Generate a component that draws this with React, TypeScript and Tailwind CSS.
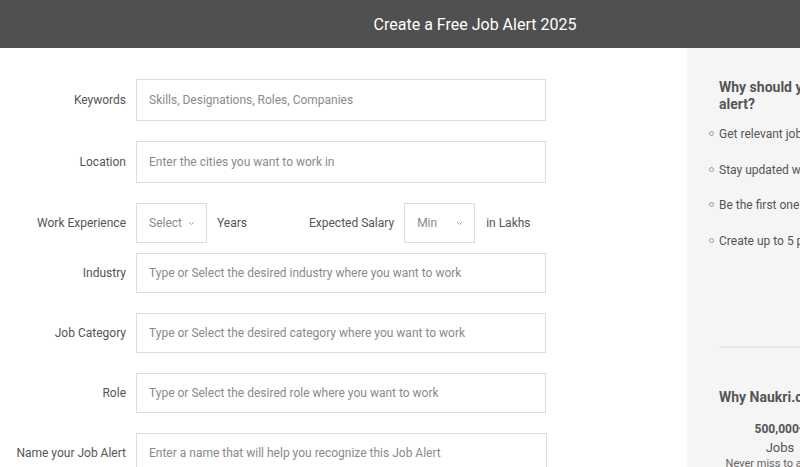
import { ReactNode } from "react";

function Chevron() {
    return (
        <svg width="7" height="5" viewBox="0 0 7 5" className="text-[#a8a8a8]">
            <path d="M1 1l2.5 2.5L6 1" fill="none" stroke="currentColor" strokeWidth="1" />
        </svg>
    );
}

function Row({ label, children, className = "" }: { label: string; children: ReactNode; className?: string }) {
    return (
        <div className={`flex items-center ${className}`}>
            <label className="w-[126px] shrink-0 text-right text-[12px] text-[#555]">{label}</label>
            <div className="ml-[10px] flex items-center">{children}</div>
        </div>
    );
}

function TextInput({ placeholder, h = "h-[42px]", w = "w-[410px]" }: { placeholder: string; h?: string; w?: string }) {
    return (
        <input
            placeholder={placeholder}
            className={`${h} ${w} border border-[#dcdcdc] bg-white pl-3 text-[12px] text-[#333] placeholder:text-[#8a8a8a] outline-none`}
        />
    );
}

function Dropdown({ value }: { value: string }) {
    return (
        <div className="h-[40px] w-[71px] border border-[#dcdcdc] flex items-center justify-between pl-3 pr-[11px] text-[12px] text-[#8a8a8a]">
            <span>{value}</span>
            <Chevron />
        </div>
    );
}

const perks = [
    "Get relevant jobs directly in your inbox",
    "Stay updated with latest opportunities",
    "Be the first one to apply",
    "Create up to 5 personalised job alerts",
];

export default function App() {
    return (
        <div className="h-screen w-screen overflow-hidden bg-white" style={{ fontFamily: "Roboto, 'Liberation Sans', sans-serif" }}>
            <div className="w-[950px]">
                {/* Header */}
                <div className="h-[48px] bg-[#505050] flex items-center justify-center">
                    <h1 className="text-[16px] text-white pt-[1px]">Create a Free Job Alert 2025</h1>
                </div>

                <div className="flex">
                    {/* Form */}
                    <div className="w-[687px] shrink-0 pt-[31px]">
                        <Row label="Keywords">
                            <TextInput placeholder="Skills, Designations, Roles, Companies" />
                        </Row>
                        <Row label="Location" className="mt-[20px]">
                            <TextInput placeholder="Enter the cities you want to work in" />
                        </Row>
                        <Row label="Work Experience" className="mt-[20px]">
                            <Dropdown value="Select" />
                            <span className="ml-[10px] text-[12px] text-[#555]">Years</span>
                            <span className="ml-[62px] text-[12px] text-[#555]">Expected Salary</span>
                            <div className="ml-[10px]">
                                <Dropdown value="Min" />
                            </div>
                            <span className="ml-[11px] text-[12px] text-[#555]">in Lakhs</span>
                        </Row>
                        <Row label="Industry" className="mt-[10px]">
                            <TextInput h="h-[40px]" placeholder="Type or Select the desired industry where you want to work" />
                        </Row>
                        <Row label="Job Category" className="mt-[20px]">
                            <TextInput h="h-[40px]" placeholder="Type or Select the desired category where you want to work" />
                        </Row>
                        <Row label="Role" className="mt-[20px]">
                            <TextInput h="h-[40px]" placeholder="Type or Select the desired role where you want to work" />
                        </Row>
                        <Row label="Name your Job Alert" className="mt-[20px]">
                            <TextInput h="h-[40px]" w="w-[411px]" placeholder="Enter a name that will help you recognize this Job Alert" />
                        </Row>
                    </div>

                    {/* Side panel */}
                    <div className="w-[263px] shrink-0 bg-[#f5f5f5] min-h-[500px] pl-[32px] pr-[32px] pt-[31px]">
                        <h2 className="text-[14px] font-bold text-[#555] leading-[17px]">Why should you create a job alert?</h2>
                        <ul className="mt-[14px]">
                            {perks.map((p) => (
                                <li key={p} className="relative h-[35.5px] text-[12px] text-[#555] leading-[14px] whitespace-nowrap">
                                    <span className="absolute -left-[10px] top-[4px] w-[5px] h-[5px] rounded-full border border-[#9a9a9a]" />
                                    {p}
                                </li>
                            ))}
                        </ul>
                        <div className="mt-[77px] h-[2px] bg-[#e6e6e6]" />
                        <h2 className="mt-[41px] text-[14px] font-bold text-[#555] leading-[17px] whitespace-nowrap">Why Naukri.com Job Alerts?</h2>
                        <div className="mt-[16px] flex">
                            <div className="w-[122px] text-center">
                                <div className="text-[12px] font-bold text-[#555] leading-[14px]">500,000+</div>
                                <div className="mt-[4px] text-[13px] text-[#555] leading-[15px]">Jobs</div>
                                <div className="mt-[2px] text-[11px] text-[#666] leading-[13px]">Never miss to apply to any relevant job</div>
                            </div>
                        </div>
                    </div>
                </div>
            </div>
        </div>
    );
}
